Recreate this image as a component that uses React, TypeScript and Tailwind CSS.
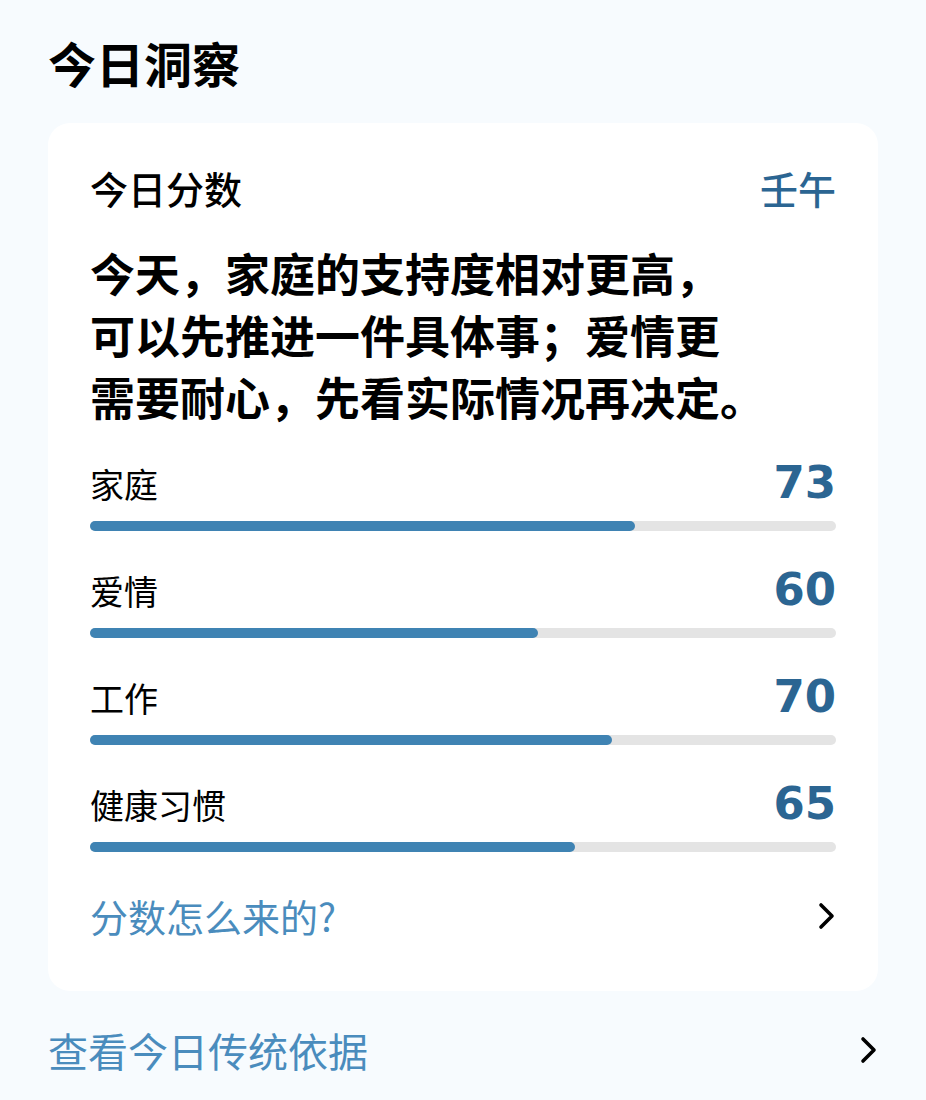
const font = { fontFamily: '"Noto Sans CJK SC", "Noto Sans", sans-serif' }

interface Score {
  label: string
  value: number
}

const scores: Score[] = [
  { label: '家庭', value: 73 },
  { label: '爱情', value: 60 },
  { label: '工作', value: 70 },
  { label: '健康习惯', value: 65 }
]

function Chevron() {
  return (
    <svg width="18" height="28" viewBox="0 0 18 28" fill="none">
      <polyline
        points="3,3 14,14 3,25"
        stroke="#000"
        strokeWidth="3.6"
        strokeLinecap="round"
        strokeLinejoin="round"
      />
    </svg>
  )
}

function ScoreRow({ label, value }: Score) {
  return (
    <div className="mt-[36px] first:mt-0">
      <div className="flex items-baseline justify-between">
        <span className="text-[34px] leading-none text-black">{label}</span>
        <span
          className="text-[45px] font-bold leading-none text-[#2b6592]"
          style={{ fontFamily: '"DejaVu Sans", Verdana, sans-serif' }}
        >
          {value}
        </span>
      </div>
      <div className="mt-[16px] h-[10px] w-full rounded-full bg-[#e4e4e4]">
        <div
          className="h-full rounded-full bg-[#3f83b3]"
          style={{ width: `${value}%` }}
        />
      </div>
    </div>
  )
}

export default function App() {
  return (
    <div className="min-h-[1100px] bg-[#f7fbfe] px-[48px] pt-[38px]" style={font}>
      <h1 className="text-[48px] font-bold leading-none text-black">今日洞察</h1>

      <div className="mt-[37px] rounded-[22px] bg-white px-[42px] pt-[46px] pb-[56px]">
        <div className="flex items-center justify-between text-[38px] font-medium leading-none">
          <span className="text-black">今日分数</span>
          <span className="text-[#2b6592]">壬午</span>
        </div>

        <p className="mt-[35px] text-[45px] font-bold leading-[62px] text-black">
          今天，家庭的支持度相对更高，
          <br />
          可以先推进一件具体事；爱情更
          <br />
          需要耐心，先看实际情况再决定。
        </p>

        <div className="mt-[32px]">
          {scores.map((s) => (
            <ScoreRow key={s.label} {...s} />
          ))}
        </div>

        <div className="mt-[45px] flex items-center justify-between">
          <span className="text-[38px] leading-none text-[#4a8cbd]">分数怎么来的?</span>
          <Chevron />
        </div>
      </div>

      <div className="mt-[39px] flex items-center justify-between">
        <span className="text-[40px] leading-none text-[#4a8cbd]">查看今日传统依据</span>
        <Chevron />
      </div>
    </div>
  )
}
